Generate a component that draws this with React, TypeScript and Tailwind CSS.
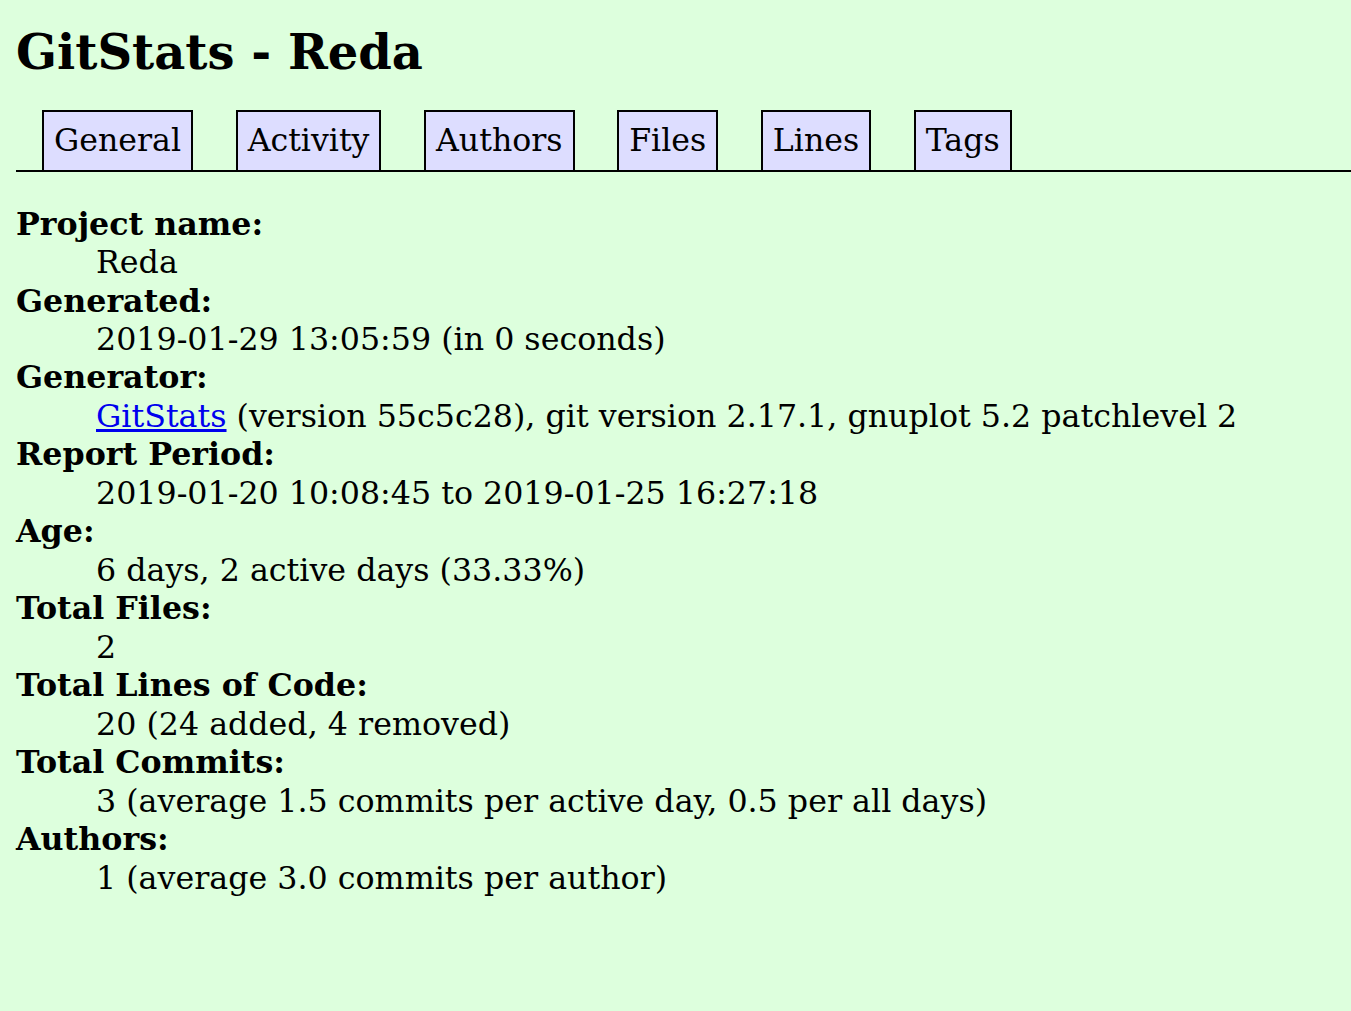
import React from "react";

const tabs = ["General", "Activity", "Authors", "Files", "Lines", "Tags"];

const items: { label: string; value: React.ReactNode }[] = [
  { label: "Project name:", value: "Reda" },
  { label: "Generated:", value: "2019-01-29 13:05:59 (in 0 seconds)" },
  {
    label: "Generator:",
    value: (
      <>
        <a href="#" className="text-[#0000ee] underline">GitStats</a> (version 55c5c28), git version 2.17.1, gnuplot 5.2 patchlevel 2
      </>
    ),
  },
  { label: "Report Period:", value: "2019-01-20 10:08:45 to 2019-01-25 16:27:18" },
  { label: "Age:", value: "6 days, 2 active days (33.33%)" },
  { label: "Total Files:", value: "2" },
  { label: "Total Lines of Code:", value: "20 (24 added, 4 removed)" },
  { label: "Total Commits:", value: "3 (average 1.5 commits per active day, 0.5 per all days)" },
  { label: "Authors:", value: "1 (average 3.0 commits per author)" },
];

export default function App() {
  return (
    <div
      className="min-h-screen bg-[#ddffdd] text-black pl-[16px] pt-[24px]"
      style={{ fontFamily: '"DejaVu Serif", serif' }}
    >
      <h1 className="text-[48px] font-bold leading-[57.6px]">GitStats - Reda</h1>
      <div className="mt-[28px] flex gap-[42.6px] pl-[26px] border-b-2 border-black h-[62px] items-end">
        {tabs.map((t) => (
          <div
            key={t}
            className="h-[62px] border-2 border-black bg-[#ddddff] px-[10px] flex items-center text-[31.6px] -mb-[2px]"
          >
            {t}
          </div>
        ))}
      </div>
      <dl className="mt-[33px] text-[31.7px] leading-[38.47px]">
        {items.map((it) => (
          <React.Fragment key={it.label}>
            <dt className="font-bold">{it.label}</dt>
            <dd className="ml-[80px]">{it.value}</dd>
          </React.Fragment>
        ))}
      </dl>
    </div>
  );
}
